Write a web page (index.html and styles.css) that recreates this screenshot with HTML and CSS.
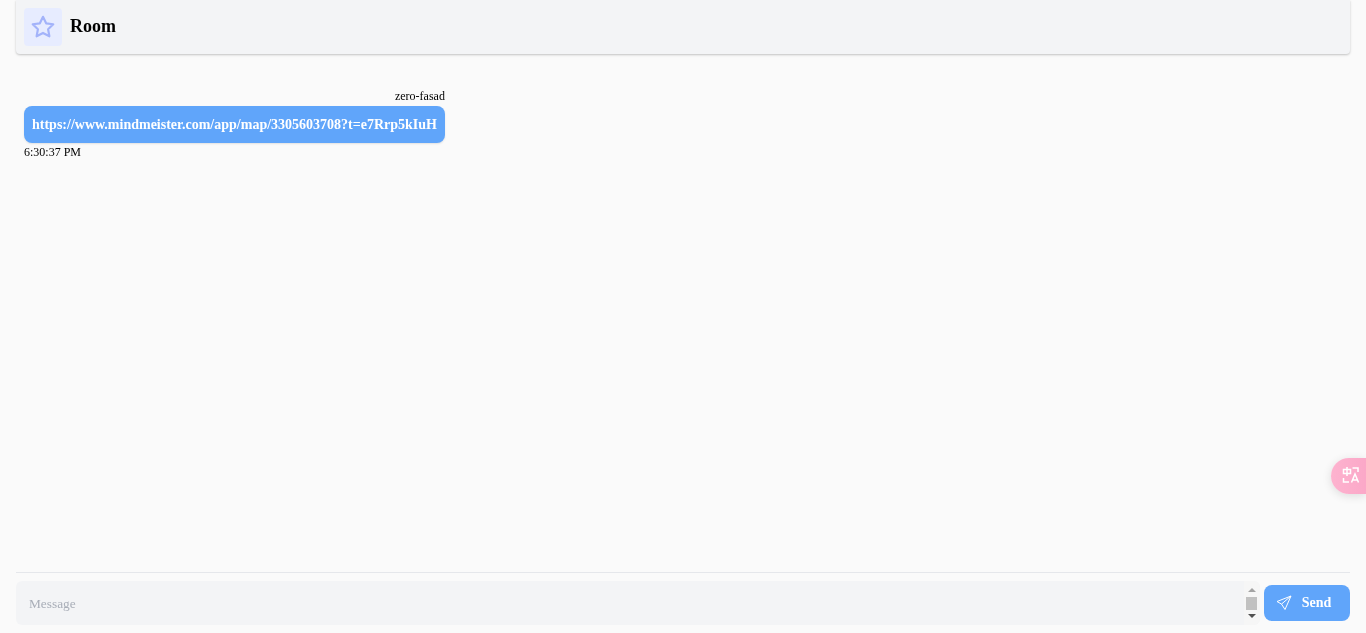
FILE: index.html
```html
<!DOCTYPE html>
<html lang="en">
<head>
<meta charset="utf-8">
<title>Room</title>
<link rel="stylesheet" href="styles.css">
</head>
<body>
<div class="app">
  <header class="room-header">
    <div class="room-icon">
      <svg width="26" height="26" viewBox="0 0 24 24" fill="none" stroke="#a3b3fa" stroke-width="2" stroke-linejoin="round"><path d="M12 2.600l2.900 6 6.600.9-4.800 4.600 1.200 6.500L12 17.500l-5.900 3.100 1.200-6.500L2.500 9.500l6.600-.9z"/></svg>
    </div>
    <h1 class="room-title">Room</h1>
  </header>
  <main class="messages">
    <div class="message">
      <div class="author">zero-fasad</div>
      <div class="bubble">https://www.mindmeister.com/app/map/3305603708?t=e7Rrp5kIuH</div>
      <div class="time">6:30:37 PM</div>
    </div>
  </main>
  <footer class="composer">
    <div class="input-box">
      <span class="placeholder">Message</span>
      <div class="scrollbar">
        <span class="arrow-up"></span>
        <span class="thumb"></span>
        <span class="arrow-down"></span>
      </div>
    </div>
    <button class="send" type="button">
      <svg width="16" height="16" viewBox="0 0 16 16" fill="none" stroke="#fff" stroke-width="1" stroke-linejoin="round"><path d="M15 1L1 6.500l4.500 2.600L9 14.500zM15 1L5.500 9.100"/></svg>
      <span>Send</span>
    </button>
  </footer>
</div>
<div class="translate-fab">
  <svg width="20" height="20" viewBox="0 0 20 20" fill="none" stroke="#fff" stroke-width="1.5"><path d="M2.500 3.500h7v4h-7zM6 1v9M11.500 2h5.500v4M2.500 12v4h5.500M10.500 16.500l3.500-8.500 3.500 8.500M11.700 14h4.600"/></svg>
</div>
</body>
</html>
```
FILE: styles.css
```css
* { box-sizing: border-box; }
html, body { margin: 0; height: 100%; }
body {
  background: #fafafa;
  color: #000;
  font-family: "Liberation Serif", "Times New Roman", serif;
  overflow: hidden;
}
.app {
  display: flex;
  flex-direction: column;
  height: 633px;
  padding: 0 16px 8px;
  will-change: transform;
}
.room-header {
  display: flex;
  align-items: center;
  gap: 8px;
  height: 54px;
  padding: 0 8px;
  background: #f3f4f6;
  border-radius: 0 0 4px 4px;
  box-shadow: 0 1px 3px rgba(0,0,0,.14), 0 1px 2px rgba(0,0,0,.1);
}
.room-icon {
  display: flex;
  align-items: center;
  justify-content: center;
  width: 38px;
  height: 38px;
  background: #e7ecff;
  border-radius: 4px;
}
.room-title { margin: 0 0 2px; font-size: 18px; font-weight: 700; line-height: 28px; }
.messages { flex: 1; padding: 32px 8px 0; }
.message { display: inline-flex; flex-direction: column; font-size: 12px; line-height: 16px; }
.author { text-align: right; height: 18px; }
.bubble {
  background: #60a5fa;
  color: #fff;
  font-size: 14px;
  font-weight: 700;
  line-height: 21px;
  padding: 8px;
  border-radius: 8px;
  box-shadow: 0 1px 2px rgba(0,0,0,.1);
  margin-bottom: 1px;
}
.composer {
  display: flex;
  align-items: center;
  gap: 4px;
  height: 53px;
  padding-top: 8px;
  border-top: 1px solid #e5e7eb;
}
.input-box {
  flex: 1;
  height: 44px;
  display: flex;
  align-items: center;
  justify-content: space-between;
  background: #f3f4f6;
  border-radius: 6px;
  padding-left: 13px;
  font-size: 13.333px;
}
.placeholder { color: #a9aeb8; padding-top: 2px; }
.scrollbar {
  width: 16px;
  height: 44px;
  background: #f6f6f6;
  border-radius: 0 6px 6px 0;
  display: flex;
  flex-direction: column;
  align-items: center;
  padding: 7px 1px 7px 0;
  justify-content: space-between;
}
.arrow-up, .arrow-down { width: 0; height: 0; border-left: 4px solid transparent; border-right: 4px solid transparent; }
.arrow-up { border-bottom: 4px solid #a3a3a3; }
.arrow-down { border-top: 4px solid #505050; }
.thumb { width: 11px; height: 13px; background: #c1c1c1; }
.send {
  width: 86px;
  height: 36px;
  display: flex;
  align-items: center;
  justify-content: center;
  gap: 10px;
  background: #60a5fa;
  color: #fff;
  border: 0;
  border-radius: 8px;
  font: 700 14px "Liberation Serif", "Times New Roman", serif;
  padding: 0 7px 0 0;
}
.translate-fab {
  position: absolute;
  top: 458px;
  right: 0;
  width: 35px;
  height: 36px;
  display: flex;
  align-items: center;
  padding-left: 10px;
  background: linear-gradient(90deg, #fdb3cf, #fba8c8);
  border-radius: 18px 0 0 18px;
  box-shadow: 0 2px 10px rgba(0,0,0,.12);
}
```
